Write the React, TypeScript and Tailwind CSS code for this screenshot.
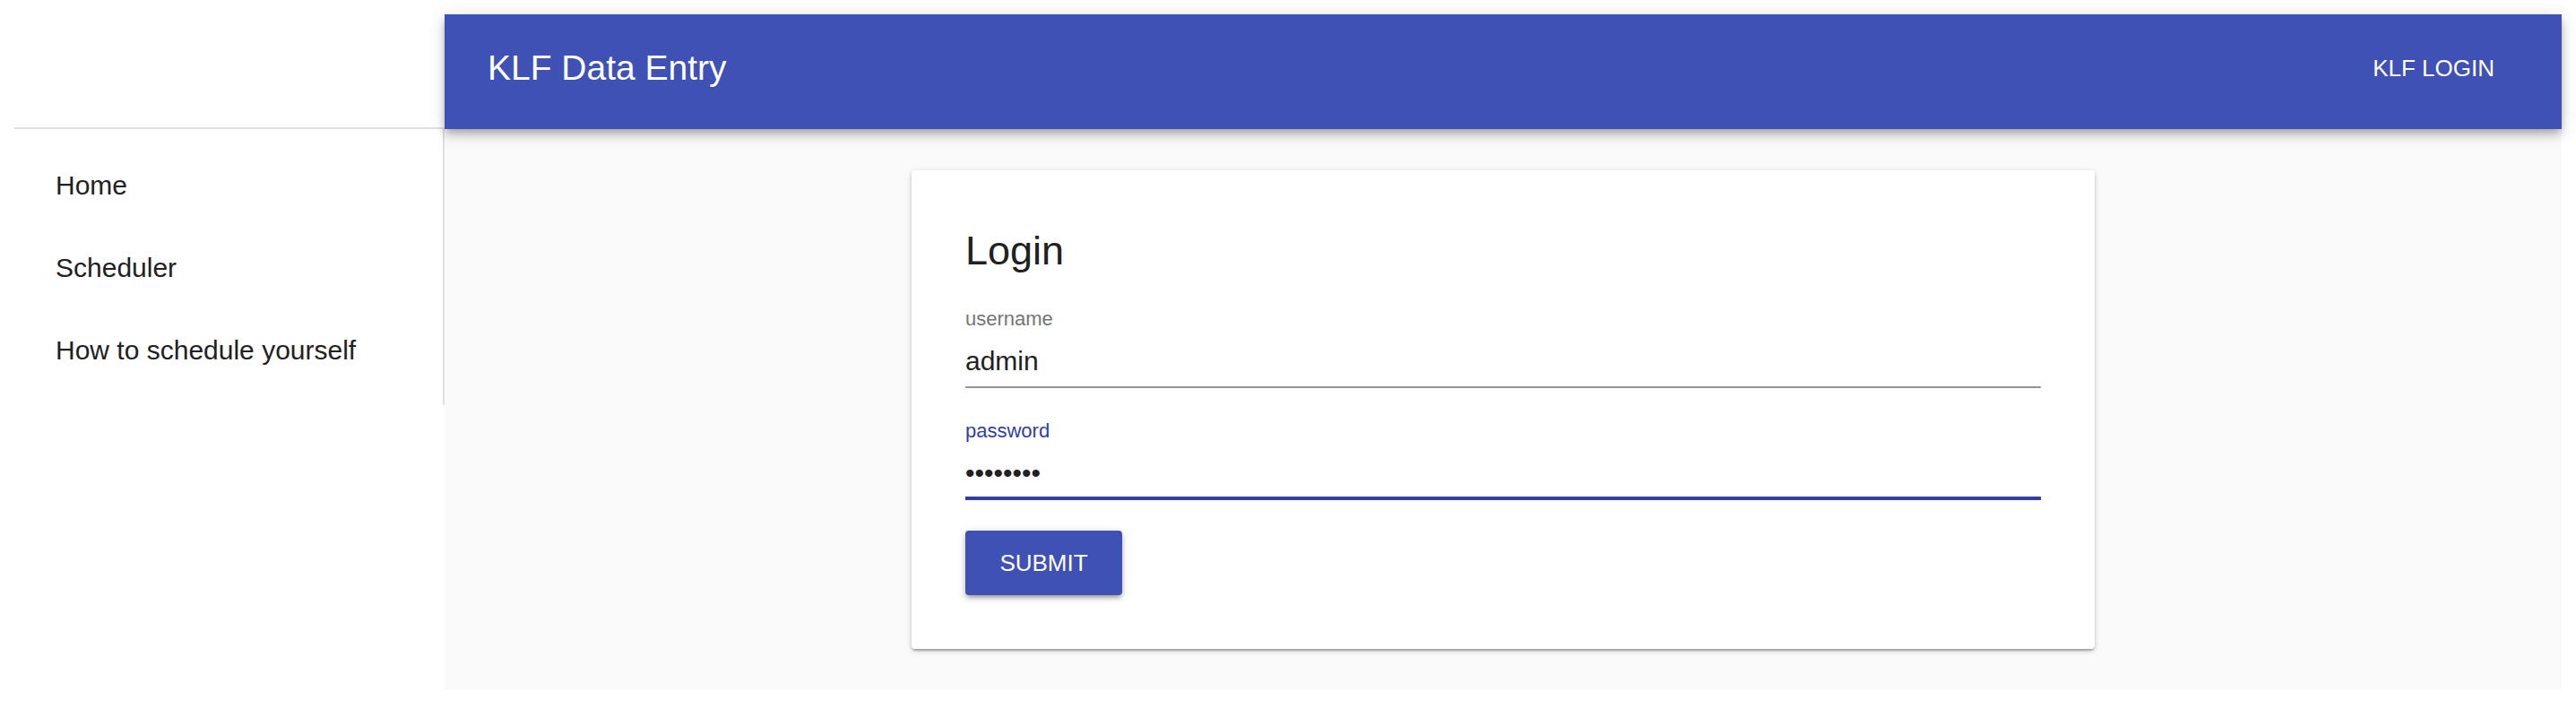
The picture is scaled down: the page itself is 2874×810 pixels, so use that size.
const navItems = ['Home', 'Scheduler', 'How to schedule yourself'];

function Field({
  label,
  value,
  focused,
}: {
  label: string;
  value: string;
  focused?: boolean;
}) {
  return (
    <div className="flex flex-col">
      <label
        className={`h-[30px] text-[22px] leading-[30px] ${
          focused ? 'text-[#303f9f]' : 'text-[#757575]'
        }`}
      >
        {label}
      </label>
      <div
        className={`mt-[12px] h-[40px] box-content text-[30px] leading-[40px] text-[#212121] ${
          focused
            ? 'pb-[6px] border-b-4 border-[#303f9f]'
            : 'pb-[8px] border-b-2 border-[#949494]'
        }`}
      >
        {value}
      </div>
    </div>
  );
}

export default function App() {
  return (
    <div className="min-h-[810px] bg-white p-4 flex items-start font-['Liberation_Sans',Arial,sans-serif]">
      {/* Drawer */}
      <aside className="w-[480px] shrink-0 bg-white">
        <div className="h-[128px] border-b-2 border-[#e0e0e0]" />
        <nav className="py-[16px] border-r-2 border-[#e0e0e0]">
          {navItems.map((item) => (
            <div
              key={item}
              className="h-[92px] flex items-center pl-[46px] text-[30px] text-[#212121]"
            >
              {item}
            </div>
          ))}
        </nav>
      </aside>

      {/* Main */}
      <main className="flex-1 bg-[#fafafa] flex flex-col">
        <header className="relative z-10 h-[128px] pb-[8px] bg-[#3f51b5] flex items-center justify-between pl-[48px] pr-[75px] text-white shadow-[0_4px_8px_-2px_rgba(0,0,0,0.2),0_8px_10px_0_rgba(0,0,0,0.14),0_2px_20px_0_rgba(0,0,0,0.12)]">
          <h1 className="text-[39px]">KLF Data Entry</h1>
          <button className="text-[26px] uppercase">KLF Login</button>
        </header>

        <div className="pt-[46px] pb-[46px] flex justify-center">
          <div className="w-[1320px] bg-white rounded-[4px] p-[60px] flex flex-col shadow-[0_2px_6px_0_rgba(0,0,0,0.2),0_2px_2px_0_rgba(0,0,0,0.14),0_4px_2px_-2px_rgba(0,0,0,0.12)]">
            <h2 className="h-[60px] text-[45px] leading-[60px] text-[#212121]">Login</h2>
            <div className="mt-[31px]">
              <Field label="username" value="admin" />
            </div>
            <div className="mt-[33px]">
              <Field label="password" value="••••••••" focused />
            </div>
            <div className="mt-[34px]">
              <button className="w-[175px] h-[72px] rounded-[4px] bg-[#3f51b5] text-white text-[26px] shadow-[0_2px_10px_0_rgba(0,0,0,0.2),0_4px_4px_0_rgba(0,0,0,0.14),0_6px_2px_-4px_rgba(0,0,0,0.12)]">
                SUBMIT
              </button>
            </div>
          </div>
        </div>
      </main>
    </div>
  );
}
